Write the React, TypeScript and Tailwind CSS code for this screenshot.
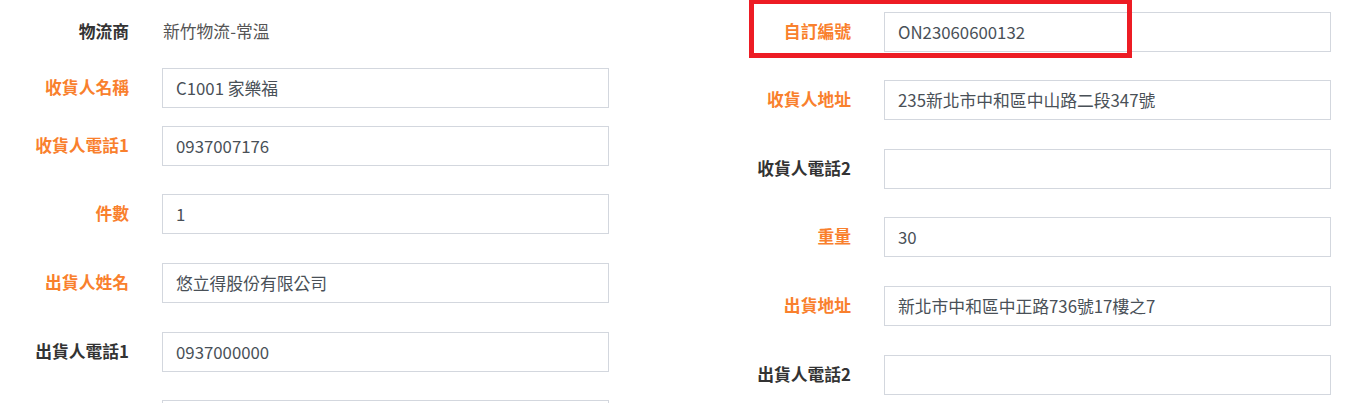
type Field = { label: string; value?: string; required?: boolean; mt: number; plain?: boolean };

const left: Field[] = [
  { label: '物流商', value: '新竹物流-常溫', plain: true, mt: 19 },
  { label: '收貨人名稱', value: 'C1001 家樂福', required: true, mt: 25 },
  { label: '收貨人電話1', value: '0937007176', required: true, mt: 18 },
  { label: '件數', value: '1', required: true, mt: 28 },
  { label: '出貨人姓名', value: '悠立得股份有限公司', required: true, mt: 29 },
  { label: '出貨人電話1', value: '0937000000', mt: 29 },
  { label: '', value: '', mt: 28 },
];

const right: Field[] = [
  { label: '自訂編號', value: 'ON23060600132', required: true, mt: 12 },
  { label: '收貨人地址', value: '235新北市中和區中山路二段347號', required: true, mt: 28 },
  { label: '收貨人電話2', value: '', mt: 29 },
  { label: '重量', value: '30', required: true, mt: 28 },
  { label: '出貨地址', value: '新北市中和區中正路736號17樓之7', required: true, mt: 29 },
  { label: '出貨人電話2', value: '', mt: 29 },
];

function Row({ f, highlight }: { f: Field; highlight?: boolean }) {
  const labelColor = f.required ? 'text-[#f9802d]' : 'text-[#333]';
  return (
    <div className="relative flex items-start" style={{ marginTop: f.mt }}>
      {highlight && (
        <div className="absolute left-[27px] top-[-13px] h-[59px] w-[383px] border-[5px] border-[#ed1c24]" />
      )}
      <div className={`w-[129px] shrink-0 text-right font-bold leading-[24px] ${labelColor} ${f.plain ? '' : 'pt-[7px]'}`}>
        {f.label}
      </div>
      {f.plain ? (
        <div className="ml-[34px] leading-[24px] text-[#555]">{f.value}</div>
      ) : (
        <div className="ml-[33px] flex h-[40px] w-[447px] shrink-0 items-center border border-[#d3d7de] bg-white pl-[13px] pt-[1px] text-[#495057]">
          {f.value}
        </div>
      )}
    </div>
  );
}

export default function App() {
  return (
    <div
      className="h-[403px] w-[1372px] overflow-hidden bg-white text-[16.8px]"
      style={{ fontFamily: '"Noto Sans CJK TC", "Noto Sans", sans-serif' }}
    >
      <div className="flex">
        <div className="w-[722px] shrink-0">
          {left.map((f, i) => (
            <Row key={i} f={f} />
          ))}
        </div>
        <div className="w-[650px] shrink-0">
          {right.map((f, i) => (
            <Row key={i} f={f} highlight={i === 0} />
          ))}
        </div>
      </div>
    </div>
  );
}
